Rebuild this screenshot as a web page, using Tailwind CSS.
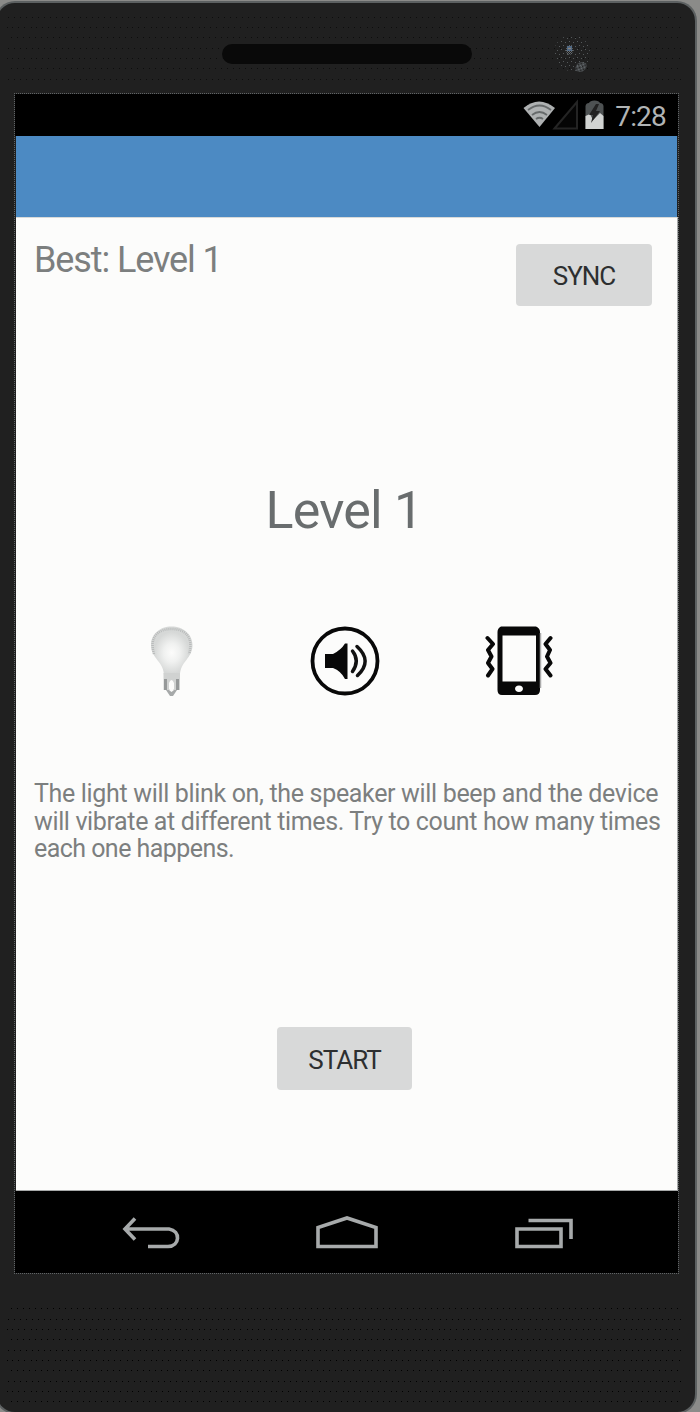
<!DOCTYPE html>
<html lang="en">
<head>
<meta charset="utf-8">
<title>Level 1</title>
<script src="https://cdn.jsdelivr.net/npm/@tailwindcss/browser@4"></script>
</head>
<body class="h-[1412px] w-[700px] overflow-hidden bg-[#8b8b89] pt-[3px] font-['Roboto','Noto_Sans',sans-serif]">
<div class="relative -ml-[3px] flex h-[1409px] w-[698px] flex-col rounded-[18px] bg-[#202020] pl-[18px] shadow-[0_0_0_2px_#5c6061]">
  <svg class="absolute inset-0 h-full w-full" aria-hidden="true">
    <defs>
      <pattern id="grain" width="24" height="31" patternUnits="userSpaceOnUse"><path fill="#000" d="M2 3h1v1h-1zM8 3h1v1h-1zM14 3h1v1h-1zM20 3h1v1h-1zM5 14h1v1h-1zM11 14h1v1h-1zM17 14h1v1h-1zM23 14h1v1h-1zM3 24h1v1h-1zM10 24h1v1h-1zM15 24h1v1h-1zM21 24h1v1h-1z"/></pattern>
    </defs>
    <rect x="10" y="12" width="675" height="70" fill="url(#grain)" opacity=".6"/>
    <rect x="10" y="1296" width="675" height="108" fill="url(#grain)"/>
  </svg>
  <div class="relative flex h-[91px] shrink-0 items-start">
    <div class="ml-[207px] mt-[41px] h-[20px] w-[250px] rounded-full bg-[#090909]"></div>
    <svg class="ml-[80px] mt-[29px]" width="40" height="42" viewBox="0 0 40 42">
      <defs>
        <pattern id="speck" width="8" height="8" patternUnits="userSpaceOnUse"><path fill="#54585a" d="M1 1h1v1h-1zM5 2h1v1h-1zM3 5h1v1h-1zM7 6h1v1h-1z"/></pattern>
        <pattern id="dense" width="2" height="2" patternUnits="userSpaceOnUse"><path fill="#666c70" d="M0 0h1v1h-1zM1 1h1v1h-1z"/></pattern>
      </defs>
      <circle cx="20" cy="21" r="18" fill="url(#speck)"/>
      <ellipse cx="17.500" cy="18" rx="3.500" ry="5" fill="url(#dense)"/>
      <ellipse cx="29" cy="35" rx="6" ry="4.500" transform="rotate(-35 29 35)" fill="url(#dense)"/>
      <rect x="15" y="14" width="5" height="5" fill="#526a85"/><rect x="16" y="16" width="3" height="1" fill="#8d8275"/>
    </svg>
  </div>
  <div class="relative flex h-[1179px] w-[663px] flex-col outline-1 outline-dotted outline-[#606466]">
    <div class="flex h-[42px] items-center justify-end bg-black pr-[12px]">
      <svg class="h-[42px] w-[90px]" viewBox="522 94 90 42">
        <path d="M523.500 108Q539 95 555 108L539.500 127Z" fill="#aeb1b2"/>
        <path d="M528 110Q539.500 101 551 110M532 115Q539.500 109 547 115M536 119Q539.500 116.500 543 119" fill="none" stroke="#666a6b" stroke-width="1.800"/>
        <path d="M554.500 128.500L577 102V128.500Z" fill="#050505" stroke="#242424" stroke-width="2"/>
        <path d="M585.500 129V106Q586 103 589 103Q590 100.500 594.500 100.500Q599 100.500 600 103Q603 103 603.500 106V129Z" fill="#4e5253"/>
        <path d="M585.500 129V116L590 114L593 120L600 113L603.500 116V129Z" fill="#d1d3d2"/>
        <path d="M596 104L589 115H593L591 123L600 111H596L599 104Z" fill="#222"/>
      </svg>
      <span class="ml-[3px] mt-[4px] text-[28px] leading-none tracking-[-0.8px] text-[#b1b4b5]">7:28</span>
    </div>
    <div class="ml-px h-[81px] w-[661px] bg-[#4c8ac3]"></div>
    <main class="ml-px flex h-[974px] w-[662px] flex-col border-y border-r border-[#a7a9a9] border-t-[#d8dad9] bg-[#fcfcfb]">
      <div class="flex h-[88px] items-start justify-between pl-[18px] pr-[25px]">
        <div class="mt-[20px] whitespace-nowrap text-[36px] leading-[44px] tracking-[-1.1px] text-[#7c7f7f]">Best: Level 1</div>
        <button class="mt-[26px] h-[62px] w-[136px] shrink-0 rounded-[4px] bg-[#d8d9d9] pt-[2px] text-[26px] leading-none tracking-[-1px] text-[#2d2f30]">SYNC</button>
      </div>
      <h1 class="mt-[173px] h-[64px] pr-[5px] text-center text-[52px] leading-[64px] tracking-[-0.8px] text-[#696d6e]">Level 1</h1>
      <div class="mt-[72px] flex h-[90px] pl-[125px]">
        <svg width="60" height="90" viewBox="141 615 60 90">
          <defs><radialGradient id="glow" cx=".5" cy=".53" r=".42"><stop offset="0" stop-color="#fcfcfb"/><stop offset=".45" stop-color="#f0f1f0"/><stop offset="1" stop-color="#d6d8d7"/></radialGradient></defs>
          <path d="M164 676C164 661 151 659 151 645C151 634 160 626.500 171.500 626.500C183 626.500 192.500 634 192.500 645C192.500 659 180 661 180 676Z" fill="url(#glow)"/>
          <path d="M154 654C149 637 158 629 171.500 629C185 629 194 637 189 654" fill="none" stroke="#b8baba" stroke-width="2.500" stroke-dasharray="1 1"/>
          <path d="M163.500 673H180V690H163.500Z" fill="#d0d2d1"/><path d="M165.500 679V690M177.500 679V690" stroke="#969999" stroke-width="3"/><path d="M169 683Q171.500 677 174 683V689Q171.500 692 169 689Z" fill="#fcfcfb"/><path d="M166 690H169L171.500 692L174 690H177L173 696H170Z" fill="#a6a9a9"/>
        </svg>
        <svg class="ml-[99px]" width="90" height="90" viewBox="300 615 90 90">
          <circle cx="345" cy="661" r="32.500" fill="none" stroke="#080808" stroke-width="3.800"/>
          <path d="M325 654H333Q341 650 345 643.500H347.500V679H345Q341 671 333 668H325Z" fill="#080808"/>
          <path d="M352.500 651Q360 660.500 352.500 671.500M357 646.500Q373 661 357.500 675.500" fill="none" stroke="#111" stroke-width="3.500" stroke-linecap="round"/>
        </svg>
        <svg class="ml-[85px]" width="90" height="90" viewBox="475 615 90 90">
          <path fill-rule="evenodd" d="M501 626.500H536Q540 628 540 632V690Q540 695 535 695H502Q497.500 695 497.500 690V632Q497.500 628 501 626.500ZM502.500 635.500V681.500H536V635.500ZM519 685.500C513.500 685.500 514 692 519 692C524 692 524.500 685.500 519 685.500Z" fill="#080808"/>
          <path d="M487.500 638L493 644L488 650L491.500 656.500L488 663L492.500 669L488 675.500M550.500 638L545.500 644L550 650L547 656.500L550.500 663L545.500 669L550.500 675.500" fill="none" stroke="#080808" stroke-width="4" stroke-linecap="round" stroke-linejoin="round"/>
          <path d="M540.500 633V688" stroke="#aaa" stroke-width="1.500"/>
        </svg>
      </div>
      <div class="mt-[75px] h-[84px] whitespace-nowrap pl-[18px] text-[25px] leading-[27.500px] text-[#7c7f7f]">
        <p class="tracking-[-0.33px]">The light will blink on, the speaker will beep and the device</p>
        <p class="tracking-[-0.37px]">will vibrate at different times. Try to count how many times</p>
        <p class="tracking-[-0.55px]">each one happens.</p>
      </div>
      <button class="ml-[261px] mt-[163px] h-[63px] w-[135px] rounded-[4px] bg-[#d8d9d9] pt-[2px] text-[26px] leading-none tracking-[-1px] text-[#2d2f30]">START</button>
    </main>
    <nav class="flex h-[82px] items-center bg-black">
      <svg width="663" height="82" viewBox="15 1191 663 82" fill="none" stroke="#a7aaab" stroke-width="3.600">
        <path d="M135 1218.500L125 1229L135 1239.500M126 1229H169C181 1231 180 1246 168 1246.500H148"/>
        <path d="M318 1246.500V1227.500L347 1218L376 1227.500V1246.500Z"/>
        <path d="M517 1229H561V1246.500H517ZM528.500 1220.500H571V1239"/>
      </svg>
    </nav>
  </div>
</div>
</body>
</html>
